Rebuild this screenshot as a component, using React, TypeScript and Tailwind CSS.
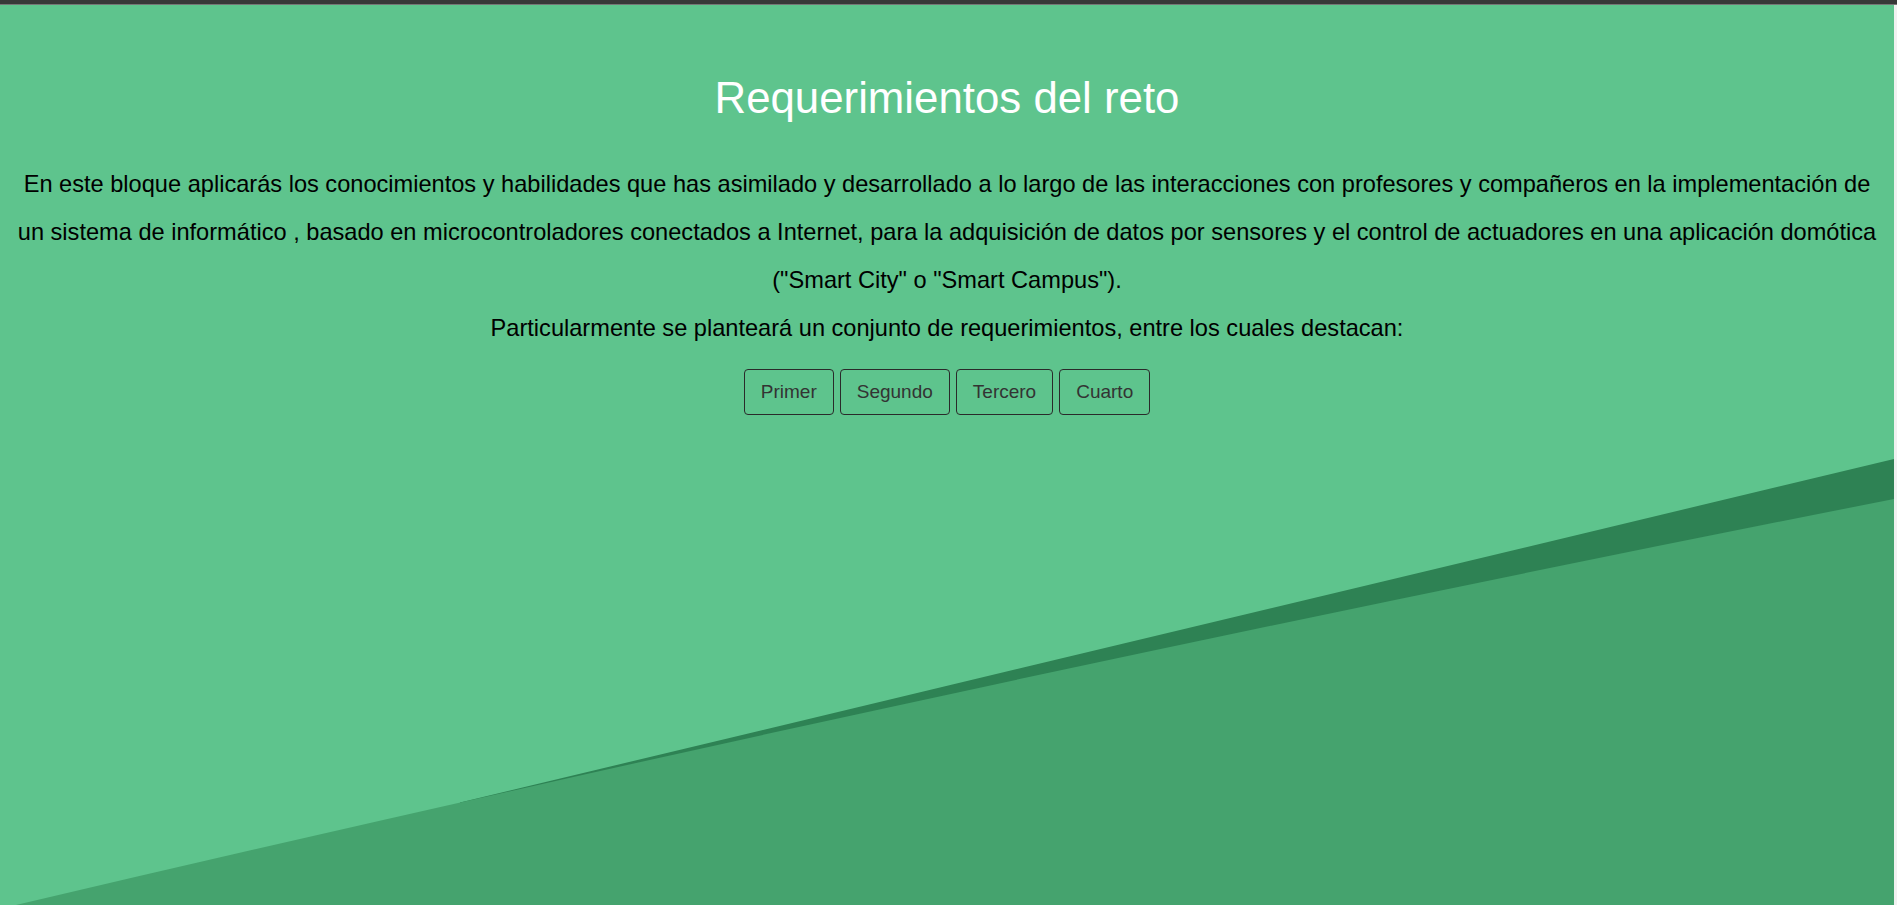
import React from "react";

const font = { fontFamily: '"Liberation Sans", Arial, sans-serif' };

export default function App() {
  const steps = ["Primer", "Segundo", "Tercero", "Cuarto"];

  return (
    <div className="flex h-[905px] w-full flex-col overflow-hidden bg-white" style={font}>
      <div className="h-[4px] bg-[#383838]" />
      <div className="h-px bg-[#767676]" />

      <div className="flex flex-1">
        <main className="relative flex-1 overflow-hidden bg-[#5ec48d]">
          {/* diagonal background bands */}
          <svg
            className="pointer-events-none absolute inset-0 h-full w-full"
            viewBox="0 5 1894 900"
            preserveAspectRatio="none"
          >
            <path d="M460 802.5 L1894 459 L1894 905 L460 905 Z" fill="#2e8254" />
            <path d="M16 905 Q955 684 1894 499 L1894 905 Z" fill="#45a36e" />
          </svg>

          <section className="relative z-10 px-2 pt-[66px] text-center">
            <h1 className="text-[43.8px] leading-[53px] text-white">Requerimientos del reto</h1>

            <p className="mt-[36px] text-[23.6px] leading-[48px] text-black">
              En este bloque aplicarás los conocimientos y habilidades que has asimilado y
              desarrollado a lo largo de las interacciones con profesores y compañeros en la
              implementación de un sistema de informático , basado en microcontroladores
              conectados a Internet, para la adquisición de datos por sensores y el control de
              actuadores en una aplicación domótica ("Smart City" o "Smart Campus").
              <br />
              Particularmente se planteará un conjunto de requerimientos, entre los cuales
              destacan:
            </p>

            <div className="mt-[17px] flex justify-center gap-[6px]">
              {steps.map((s) => (
                <button
                  key={s}
                  className="h-[46px] rounded-[4px] border border-[#2a2a2a] px-4 text-[19px] text-[#333333]"
                >
                  {s}
                </button>
              ))}
            </div>
          </section>
        </main>
        <div className="w-[3px] bg-[#f1f1f1]" />
      </div>
    </div>
  );
}
